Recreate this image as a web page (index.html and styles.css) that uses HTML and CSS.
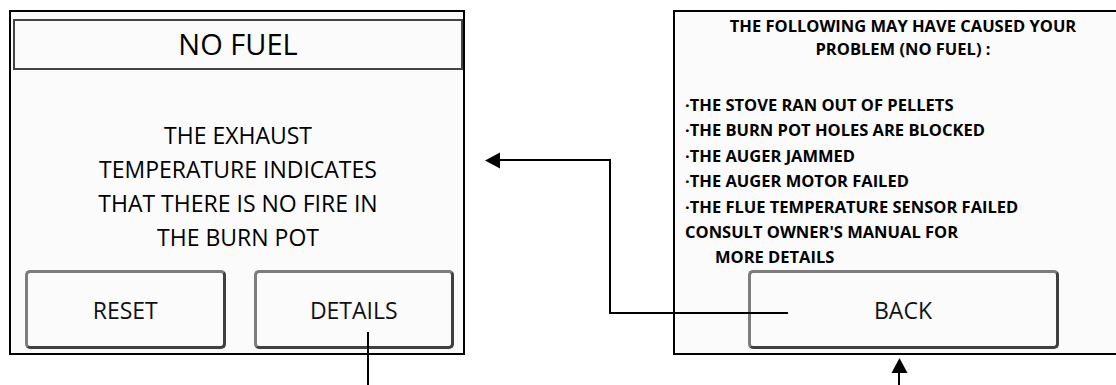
FILE: index.html
```html
<!DOCTYPE html>
<html lang="en">
  <head>
    <meta charset="UTF-8" />
    <meta name="viewport" content="width=device-width, initial-scale=1.0" />
    <title>No Fuel - Fehlerbildschirm</title>
    <link rel="stylesheet" href="styles.css">
  </head>
  <body>
    <div class="sheet">
      <!-- Bildschirm 1: Fehlermeldung -->
      <div class="screen screen-alarm">
        <div class="alarm-title">NO FUEL</div>
        <div class="alarm-text">
          THE EXHAUST<br />
          TEMPERATURE INDICATES<br />
          THAT THERE IS NO FIRE IN<br />
          THE BURN POT
        </div>
        <div class="button-row">
          <button class="panel-btn">RESET</button>
          <button class="panel-btn">DETAILS</button>
        </div>
      </div>

      <!-- Bildschirm 2: Details -->
      <div class="screen screen-details">
        <div class="details-head">
          THE FOLLOWING MAY HAVE CAUSED YOUR<br />
          PROBLEM (NO FUEL) :
        </div>
        <ul class="cause-list">
          <li>·THE STOVE RAN OUT OF PELLETS</li>
          <li>·THE BURN POT HOLES ARE BLOCKED</li>
          <li>·THE AUGER JAMMED</li>
          <li>·THE AUGER MOTOR FAILED</li>
          <li>·THE FLUE TEMPERATURE SENSOR FAILED</li>
          <li>CONSULT OWNER'S MANUAL FOR</li>
          <li class="indent">MORE DETAILS</li>
        </ul>
        <div class="button-row single">
          <button class="panel-btn wide">BACK</button>
        </div>
      </div>

      <!-- Verbindungspfeile zwischen den Bildschirmen -->
      <svg class="connectors" width="1116" height="385" viewBox="0 0 1116 385">
        <g stroke="#000" stroke-width="2" fill="none">
          <line x1="368" y1="332" x2="368" y2="385" />
          <polyline points="788,313 610,313 610,160 499,160" />
          <line x1="899" y1="371" x2="899" y2="385" />
        </g>
        <g fill="#000">
          <polygon points="485,160.5 500,152.5 500,168.5" />
          <polygon points="899.5,358 891.5,373 907.5,373" />
        </g>
      </svg>
    </div>
  </body>
</html>
```

FILE: styles.css
```css
body {
  margin: 0;
  background: #fff;
  font-family: "Open Sans", Arial, sans-serif;
  color: #000;
  overflow: hidden;
}
.sheet {
  position: relative;
  width: 1116px;
  height: 385px;
  overflow: hidden;
  display: flex;
  gap: 208px;
  padding: 10px 0 0 9px;
  box-sizing: border-box;
}
.screen {
  flex: none;
  width: 456px;
  height: 345px;
  box-sizing: border-box;
  border: 2px solid #000;
  background: #fbfbfb;
  display: flex;
  flex-direction: column;
}
.screen-alarm {
  padding: 7px 0 4px 2px;
}
.alarm-title {
  height: 51px;
  box-sizing: border-box;
  border: 2px solid #444;
  text-align: center;
  font-size: 29px;
  line-height: 45px;
}
.alarm-text {
  margin-top: 48px;
  text-align: center;
  font-size: 23px;
  line-height: 34px;
}
.button-row {
  margin-top: auto;
  display: flex;
  gap: 28px;
  padding: 0 9px 0 12px;
}
.panel-btn {
  flex: 1;
  height: 79px;
  box-sizing: border-box;
  font-family: "Open Sans", Arial, sans-serif;
  font-size: 23px;
  color: #111;
  background: #fbfbfb;
  border: 3px solid;
  border-color: #7d7d7d #404040 #404040 #7d7d7d;
  border-radius: 5px;
  padding: 0;
}
.button-row.single {
  justify-content: center;
  padding: 0;
}
.panel-btn.wide {
  flex: none;
  width: 311px;
}
.screen-details {
  width: 458px;
  padding: 2px 8px 4px 10px;
}
.details-head {
  text-align: center;
  font-weight: bold;
  font-size: 16.5px;
  line-height: 23px;
}
.cause-list {
  list-style: none;
  margin: 32px 0 0;
  padding: 0;
  font-weight: bold;
  font-size: 16.5px;
  line-height: 25.4px;
}
.cause-list .indent {
  padding-left: 30px;
}
.connectors {
  position: absolute;
  left: 0;
  top: 0;
  pointer-events: none;
}
```
